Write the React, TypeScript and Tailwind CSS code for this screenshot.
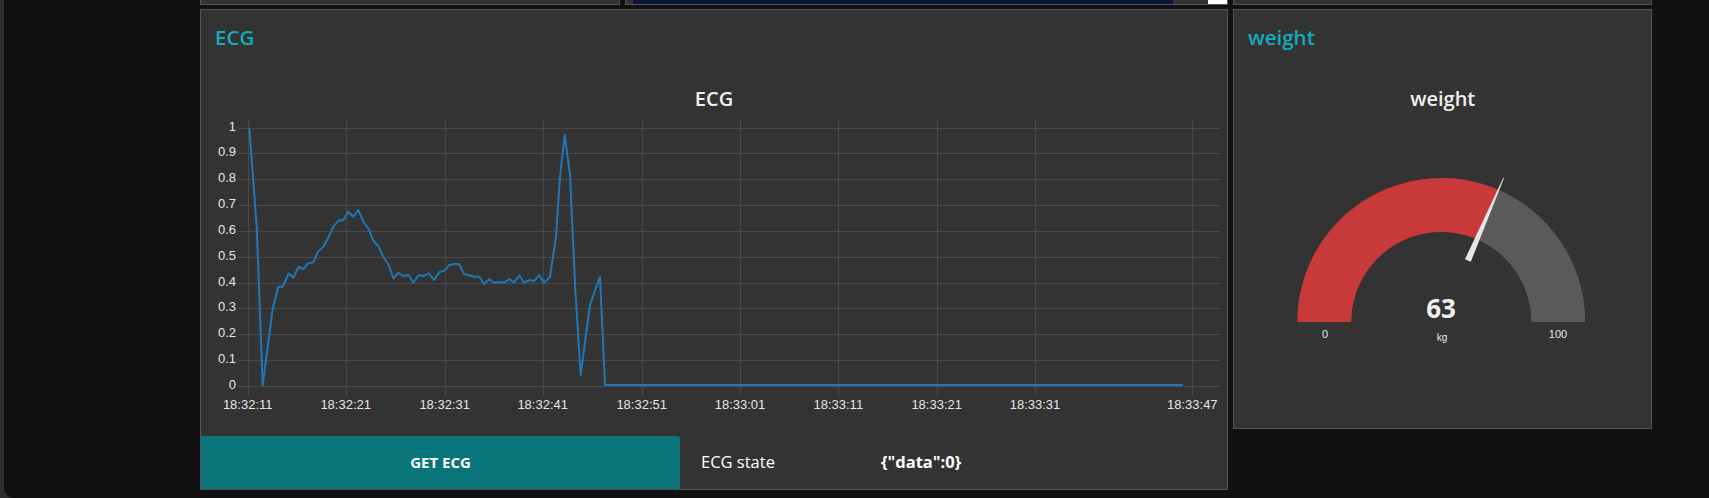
import React from "react";

const z4: [number, number][] = [
  [178, 83], [200, 380], [218, 857], [248, 625], [265, 560], [278, 560], [296, 520], [310, 533],
  [326, 500], [340, 508], [354, 490], [370, 487], [384, 455], [400, 440], [414, 415], [430, 380],
  [446, 362], [460, 360], [475, 335], [490, 350], [505, 330], [520, 365], [535, 385], [549, 420],
  [566, 440], [580, 470], [596, 495], [610, 535], [626, 518], [640, 528], [656, 525], [670, 548],
  [686, 525], [700, 528], [716, 520], [732, 540], [748, 517], [762, 512], [778, 495], [792, 492],
  [808, 493], [822, 522], [838, 526], [852, 530], [868, 530], [882, 552], [898, 537], [912, 548],
  [928, 546], [942, 548], [958, 537], [972, 548], [988, 526], [1002, 548], [1018, 540], [1032, 543],
  [1048, 526], [1062, 548], [1080, 530], [1098, 410], [1110, 230], [1124, 105], [1140, 225],
  [1156, 570], [1172, 825], [1186, 720], [1200, 615], [1216, 570], [1230, 530], [1245, 855],
];

const pts = [
  ...z4.map(([x, y]) => [190 + x / 3, 100 + y / 3]),
  [1182.7, 385],
]
  .map(([x, y]) => `${x.toFixed(1)},${y.toFixed(1)}`)
  .join(" ");

const xLabels: [string, number][] = [
  ["18:32:11", 247.7],
  ["18:32:21", 345.7],
  ["18:32:31", 444.7],
  ["18:32:41", 542.7],
  ["18:32:51", 641.7],
  ["18:33:01", 740],
  ["18:33:11", 838.3],
  ["18:33:21", 936.7],
  ["18:33:31", 1035],
  ["18:33:47", 1192.3],
];

const yVals = [0, 0.1, 0.2, 0.3, 0.4, 0.5, 0.6, 0.7, 0.8, 0.9, 1];

const axisFont = "'Liberation Sans', Arial, sans-serif";

function EcgChart() {
  const y0 = 385.7;
  const step = 25.8;
  return (
    <svg width={1026} height={380} viewBox="201 56 1026 380" className="block">
      <text x={714} y={106} textAnchor="middle" fontFamily="'Open Sans', sans-serif" fontSize={20} fontWeight={600} fill="#f0f0f0">
        ECG
      </text>
      {yVals.map((v, i) => {
        const y = Math.round(y0 - i * step) + 0.5;
        return (
          <g key={v}>
            <line x1={238} x2={1221} y1={y} y2={y} stroke="#4a4a4a" strokeWidth={1} />
            <text x={236} y={y + 2.8} textAnchor="end" fontFamily={axisFont} fontSize={13} fill="#e6e6e6">
              {String(v)}
            </text>
          </g>
        );
      })}
      {xLabels.map(([t, x]) => {
        const xx = Math.round(x) + 0.5;
        return (
          <g key={t}>
            <line x1={xx} x2={xx} y1={120} y2={396} stroke="#4a4a4a" strokeWidth={1} />
            <text x={x} y={409} textAnchor="middle" fontFamily={axisFont} fontSize={13} fill="#e6e6e6">
              {t}
            </text>
          </g>
        );
      })}
      <polyline points={pts} fill="none" stroke="#1f77b4" strokeWidth={2} strokeLinejoin="round" />
    </svg>
  );
}

function Gauge() {
  const cx = 1441.3;
  const cy = 322;
  const R = 144;
  const r = 90;
  const f = 0.63;
  const th = Math.PI * (1 - f);
  const c = Math.cos(th);
  const s = Math.sin(th);
  const oX = cx + R * c;
  const oY = cy - R * s;
  const iX = cx + r * c;
  const iY = cy - r * s;
  const red = `M ${cx - R} ${cy} A ${R} ${R} 0 0 1 ${oX} ${oY} L ${iX} ${iY} A ${r} ${r} 0 0 0 ${cx - r} ${cy} Z`;
  const gray = `M ${oX} ${oY} A ${R} ${R} 0 0 1 ${cx + R} ${cy} L ${cx + r} ${cy} A ${r} ${r} 0 0 0 ${iX} ${iY} Z`;
  const px = -s;
  const py = -c;
  const bx = cx + 67 * c;
  const by = cy - 67 * s;
  const tx = cx + 157 * c;
  const ty = cy - 157 * s;
  const w = 3.2;
  const needle = `${bx + px * w},${by + py * w} ${tx + px * 0.4},${ty + py * 0.4} ${tx - px * 0.4},${ty - py * 0.4} ${bx - px * w},${by - py * w}`;
  return (
    <svg width={417} height={372} viewBox="1234 56 417 372" className="block">
      <text x={1442.7} y={106} textAnchor="middle" fontFamily="'Open Sans', sans-serif" fontSize={20} fontWeight={600} fill="#f0f0f0">
        weight
      </text>
      <path d={red} fill="#c8393a" />
      <path d={gray} fill="#5a5a5a" />
      <polygon points={needle} fill="#e6e6e6" />
      <text x={1441} y={318} textAnchor="middle" fontFamily="'Open Sans', sans-serif" fontSize={26} fontWeight={700} fill="#f0f0f0">
        63
      </text>
      <text x={1325} y={338} textAnchor="middle" fontFamily={axisFont} fontSize={11} fill="#e6e6e6">
        0
      </text>
      <text x={1558} y={338} textAnchor="middle" fontFamily={axisFont} fontSize={11} fill="#e6e6e6">
        100
      </text>
      <text x={1442} y={341} textAnchor="middle" fontFamily={axisFont} fontSize={10} fill="#e6e6e6">
        kg
      </text>
    </svg>
  );
}

export default function App() {
  return (
    <div className="w-[1709px] h-[498px] bg-[#2e2e2e] overflow-hidden font-['Open_Sans',sans-serif]">
      <div className="ml-[4px] h-[498px] bg-[#111111] rounded-bl-[10px] flex">
        <div className="w-[196px] shrink-0" />
        <div className="w-[1452px] flex flex-col shrink-0">
          <div className="flex gap-[5px] h-[5px]">
            <div className="w-[420px] h-[5px] bg-[#333333] border-x border-b border-[#555555]" />
            <div className="w-[603px] h-[5px] bg-[#333333] border-x border-b border-[#555555] flex pl-[7px]">
              <div className="w-[540px] h-[4px] bg-[#0b1637]" />
              <div className="ml-auto w-[19px] h-[4px] bg-white" />
            </div>
            <div className="w-[419px] h-[5px] bg-[#333333] border-x border-b border-[#555555]" />
          </div>
          <div className="mt-[4px] flex gap-[5px] items-start">
            <div className="w-[1028px] h-[481px] bg-[#333333] border border-[#555555] flex flex-col">
              <div className="h-[46px] pt-[13px] pl-[14px] text-[20.5px] leading-[28px] font-semibold text-[#12adbd]">ECG</div>
              <EcgChart />
              <div className="h-[53px] flex">
                <div className="w-[479px] h-full bg-[#097479] rounded-tr-[3px] flex items-center justify-center text-white text-[15px] font-bold">
                  GET ECG
                </div>
                <div className="flex items-center pl-[21px] text-white text-[16.5px]">
                  <div className="w-[180px]">ECG state</div>
                  <div className="font-bold">{'{"data":0}'}</div>
                </div>
              </div>
            </div>
            <div className="w-[419px] h-[420px] bg-[#333333] border border-[#555555] flex flex-col">
              <div className="h-[46px] pt-[13px] pl-[14px] text-[20.5px] leading-[28px] font-semibold text-[#12adbd]">weight</div>
              <Gauge />
            </div>
          </div>
        </div>
      </div>
    </div>
  );
}
